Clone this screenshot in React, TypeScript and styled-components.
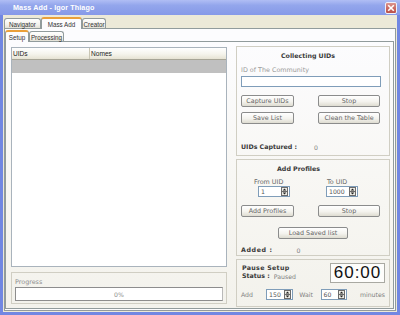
import React from 'react';
import styled, { createGlobalStyle } from 'styled-components';

const UI = `'DejaVu Sans', Verdana, sans-serif`;
const SANS = `'Liberation Sans', Arial, sans-serif`;

const GlobalStyle = createGlobalStyle`
  html, body { margin: 0; padding: 0; }
  body { width: 400px; height: 315px; overflow: hidden; background: #fff; }
  * { box-sizing: border-box; }
`;

const Window = styled.div`
  width: 400px;
  height: 315px;
  display: flex;
  flex-direction: column;
  background: #7187e2;
`;

const TitleBar = styled.div`
  height: 15px;
  flex: none;
  display: flex;
  align-items: center;
  justify-content: space-between;
  padding: 0 3px 0 13px;
  background: linear-gradient(180deg, #b0bef4 0%, #93a6ec 35%, #8699e8 100%);
`;

const Title = styled.span`
  font-family: ${SANS};
  font-weight: 700;
  font-size: 7.2px;
  color: #fff;
  letter-spacing: 0.1px;
`;

const CloseButton = styled.div`
  width: 12px;
  height: 12px;
  border: 1px solid #eef0fa;
  border-radius: 2px;
  background: linear-gradient(180deg, #dc958f 0%, #c8645d 60%, #b9524c 100%);
  display: flex;
  align-items: center;
  justify-content: center;
`;

const Client = styled.div`
  flex: 1;
  margin: 0 3px 3px;
  background: #ece9d8;
  display: flex;
  flex-direction: column;
  padding: 0 1px 1px;
  min-height: 0;
`;

const TabStrip = styled.div<{ $h: number; $pad?: number }>`
  height: ${(p) => p.$h}px;
  flex: none;
  display: flex;
  align-items: flex-end;
  padding-left: ${(p) => p.$pad ?? 0}px;
  position: relative;
  z-index: 1;
`;

const Tab = styled.div<{ $w: number; $active?: boolean }>`
  width: ${(p) => p.$w}px;
  height: ${(p) => (p.$active ? 12 : 10)}px;
  margin-bottom: ${(p) => (p.$active ? -1 : 0)}px;
  border: 1px solid #919b9c;
  border-bottom: none;
  border-top: ${(p) => (p.$active ? '2px solid #eaa03a' : '1px solid #919b9c')};
  border-radius: 3px 3px 0 0;
  background: ${(p) =>
    p.$active ? '#fcfcfe' : 'linear-gradient(180deg, #ffffff 0%, #f3f2ed 60%, #e3e1d6 100%)'};
  font-family: ${SANS};
  font-size: 6.3px;
  color: #333;
  display: flex;
  align-items: center;
  justify-content: center;
  padding-top: ${(p) => (p.$active ? 0 : 1)}px;
`;

const OuterPage = styled.div`
  flex: 1;
  min-height: 0;
  border: 1px solid #919b9c;
  background: #fcfcfe;
  display: flex;
  flex-direction: column;
  padding: 0 1px 1px 0;
`;

const InnerPage = styled.div`
  flex: 1;
  min-height: 0;
  border: 1px solid #919b9c;
  background: linear-gradient(180deg, #fcfcfe 0%, #f7f6f2 60%, #f3f2ec 100%);
  padding: 4px 2px 1px 5px;
`;

const Columns = styled.div`
  display: grid;
  grid-template-columns: 216px 154px;
  column-gap: 9px;
  height: 100%;
`;

const LeftCol = styled.div`
  display: flex;
  flex-direction: column;
  gap: 5px;
  padding-top: 1px;
`;

const RightCol = styled.div`
  display: flex;
  flex-direction: column;
  gap: 3px;
`;

const ListView = styled.div`
  height: 220px;
  border: 1px solid #a9b3bc;
  background: #fff;
  display: flex;
  flex-direction: column;
`;

const ListHeader = styled.div`
  height: 12px;
  display: grid;
  grid-template-columns: 78px 1fr;
  background: linear-gradient(180deg, #ffffff 0%, #f5f4ec 55%, #e6e3d3 100%);
  border-bottom: 1px solid #a7a596;
`;

const HeaderCell = styled.div<{ $divider?: boolean }>`
  font-family: ${SANS};
  font-size: 6.6px;
  color: #222;
  padding-left: 1px;
  display: flex;
  align-items: center;
  border-right: ${(p) => (p.$divider ? '1px solid #c9c6b4' : 'none')};
`;

const SelectedRow = styled.div`
  height: 13px;
  background: #c0c0c0;
`;

const Group = styled.div<{ $h: number }>`
  height: ${(p) => p.$h}px;
  border: 1px solid #d0cec3;
  display: flex;
  flex-direction: column;
`;

const ProgressGroup = styled(Group)`
  padding: 5px 3px 0 3px;
`;

const Label = styled.div<{ $tone?: string; $mt?: number; $ml?: number }>`
  font-family: ${UI};
  font-size: 6.4px;
  line-height: 8px;
  color: ${(p) => p.$tone ?? '#777'};
  margin-top: ${(p) => p.$mt ?? 0}px;
  margin-left: ${(p) => p.$ml ?? 0}px;
  white-space: nowrap;
`;

const Strong = styled.span<{ $mt?: number; $ml?: number; $ls?: number }>`
  display: block;
  font-family: ${UI};
  font-weight: 700;
  font-size: 6.3px;
  line-height: 8px;
  letter-spacing: ${(p) => p.$ls ?? 0}px;
  color: #3a3a3a;
  margin-top: ${(p) => p.$mt ?? 0}px;
  margin-left: ${(p) => p.$ml ?? 0}px;
  white-space: nowrap;
`;

const ProgressBar = styled.div`
  height: 14px;
  margin-top: 1px;
  border: 1px solid #8d8d8d;
  border-right-color: #b9b9b9;
  background: #fff;
  font-family: ${UI};
  font-size: 6.2px;
  color: #8a8a8a;
  display: flex;
  align-items: center;
  justify-content: center;
`;

const Panel = styled(Group)<{ $pt?: number }>`
  padding: ${(p) => p.$pt ?? 5}px 4px 0 4px;
`;

const TextBox = styled.div`
  width: 140px;
  height: 11px;
  margin-top: 2px;
  border: 1px solid #7f9db9;
  background: #fff;
`;

const ButtonGrid = styled.div<{ $mt: number }>`
  display: grid;
  grid-template-columns: 53px 62px;
  column-gap: 24px;
  row-gap: 5px;
  margin-top: ${(p) => p.$mt}px;
`;

const Button = styled.div<{ $w?: number; $ml?: number; $mt?: number }>`
  height: 12px;
  width: ${(p) => (p.$w ? `${p.$w}px` : 'auto')};
  margin-left: ${(p) => p.$ml ?? 0}px;
  margin-top: ${(p) => p.$mt ?? 0}px;
  border: 1px solid #8b8c8c;
  border-radius: 2px;
  background: linear-gradient(180deg, #ffffff 0%, #f4f3ee 55%, #dedcd1 100%);
  font-family: ${UI};
  font-size: 6.4px;
  color: #666;
  display: flex;
  align-items: center;
  justify-content: center;
  white-space: nowrap;
`;

const ValueRow = styled.div<{ $mt: number; $gap: number }>`
  display: flex;
  align-items: center;
  gap: ${(p) => p.$gap}px;
  margin-top: ${(p) => p.$mt}px;
`;

const SpinRow = styled.div`
  display: flex;
  margin-top: 5px;
`;

const SpinField = styled.div<{ $w: number; $ml: number }>`
  width: ${(p) => p.$w}px;
  margin-left: ${(p) => p.$ml}px;
  display: flex;
  flex-direction: column;
`;

const SpinBox = styled.div<{ $w: number; $ml?: number }>`
  width: ${(p) => p.$w}px;
  height: 11px;
  margin-left: ${(p) => p.$ml ?? 0}px;
  border: 1px solid #7f9db9;
  background: #fff;
  display: flex;
  align-items: center;
  justify-content: space-between;
  padding: 0 1px 0 2px;
  font-family: ${UI};
  font-size: 6.2px;
  color: #555;
`;

const SpinArrows = styled.svg`
  width: 7px;
  height: 9px;
  display: block;
`;

const PauseTop = styled.div`
  display: flex;
  justify-content: space-between;
  align-items: flex-start;
  height: 20px;
`;

const Clock = styled.div`
  width: 55px;
  height: 20px;
  border: 1px solid #a9a9a2;
  background: #fdfdfb;
  font-family: ${SANS};
  font-size: 17px;
  letter-spacing: 1px;
  color: #111;
  display: flex;
  align-items: center;
  justify-content: center;
`;

const PauseBottom = styled.div`
  display: flex;
  align-items: center;
  margin-top: 6px;
`;

const Inline = styled.span<{ $w?: number; $ml?: number }>`
  display: inline-block;
  width: ${(p) => (p.$w ? `${p.$w}px` : 'auto')};
  margin-left: ${(p) => p.$ml ?? 0}px;
  font-family: ${UI};
  font-size: 6.2px;
  color: #808080;
  white-space: nowrap;
`;

function Spinner({ value, w, ml }: { value: string; w: number; ml?: number }) {
  return (
    <SpinBox $w={w} $ml={ml}>
      <span>{value}</span>
      <SpinArrows viewBox="0 0 7 9">
        <rect x="0.5" y="0.5" width="6" height="8" fill="#ecebe4" stroke="#6b6b6b" />
        <line x1="0.5" y1="4.5" x2="6.5" y2="4.5" stroke="#6b6b6b" />
        <path d="M3.5 1.6 L5.3 3.6 L1.7 3.6 Z" fill="#222" />
        <path d="M1.7 5.4 L5.3 5.4 L3.5 7.4 Z" fill="#222" />
      </SpinArrows>
    </SpinBox>
  );
}

export default function App() {
  return (
    <>
      <GlobalStyle />
      <Window>
        <TitleBar>
          <Title>Mass Add - Igor Thiago</Title>
          <CloseButton>
            <svg width="8" height="8" viewBox="0 0 8 8">
              <path d="M1.2 1.2 L6.8 6.8 M6.8 1.2 L1.2 6.8" stroke="#fff" strokeWidth="1.6" />
            </svg>
          </CloseButton>
        </TitleBar>

        <Client>
          <TabStrip $h={13}>
            <Tab $w={37}>Navigator</Tab>
            <Tab $w={41} $active>Mass Add</Tab>
            <Tab $w={24}>Creator</Tab>
          </TabStrip>

          <OuterPage>
            <TabStrip $h={12}>
              <Tab $w={24} $active>Setup</Tab>
              <Tab $w={35}>Processing</Tab>
            </TabStrip>

            <InnerPage>
              <Columns>
                <LeftCol>
                  <ListView>
                    <ListHeader>
                      <HeaderCell $divider>UIDs</HeaderCell>
                      <HeaderCell>Nomes</HeaderCell>
                    </ListHeader>
                    <SelectedRow />
                  </ListView>

                  <ProgressGroup $h={32}>
                    <Label $tone="#8e8e8e">Progress</Label>
                    <ProgressBar>0%</ProgressBar>
                  </ProgressGroup>
                </LeftCol>

                <RightCol>
                  <Panel $h={110}>
                    <Strong $ml={40}>Collecting UIDs</Strong>
                    <Label $tone="#999" $mt={6}>ID of The Community</Label>
                    <TextBox />
                    <ButtonGrid $mt={8}>
                      <Button>Capture UIDs</Button>
                      <Button>Stop</Button>
                      <Button>Save List</Button>
                      <Button>Clean the Table</Button>
                    </ButtonGrid>
                    <ValueRow $mt={19} $gap={0}>
                      <Strong>UIDs Captured :</Strong>
                      <Inline $ml={17}>0</Inline>
                    </ValueRow>
                  </Panel>

                  <Panel $h={97}>
                    <Strong $ml={36}>Add Profiles</Strong>
                    <SpinRow>
                      <SpinField $w={72} $ml={13}>
                        <Label $tone="#666">From UID</Label>
                        <Spinner value="1" w={32} ml={4} />
                      </SpinField>
                      <SpinField $w={40} $ml={0}>
                        <Label $tone="#666" $ml={1}>To UID</Label>
                        <Spinner value="1000" w={32} />
                      </SpinField>
                    </SpinRow>
                    <ButtonGrid $mt={8}>
                      <Button>Add Profiles</Button>
                      <Button>Stop</Button>
                    </ButtonGrid>
                    <Button $w={70} $ml={37} $mt={10}>Load Saved list</Button>
                    <ValueRow $mt={7} $gap={0}>
                      <Strong $ls={0.6}>Added :</Strong>
                      <Inline $ml={24}>0</Inline>
                    </ValueRow>
                  </Panel>

                  <Panel $h={48} $pt={3}>
                    <PauseTop>
                      <div>
                        <Strong $mt={1} $ml={1} $ls={0.3}>Pause Setup</Strong>
                        <ValueRow $mt={0} $gap={4}>
                          <Strong $ml={1}>Status :</Strong>
                          <Inline>Paused</Inline>
                        </ValueRow>
                      </div>
                      <Clock>60:00</Clock>
                    </PauseTop>
                    <PauseBottom>
                      <Inline $w={27}>Add</Inline>
                      <Spinner value="150" w={29} />
                      <Inline $w={23} $ml={6}>Wait</Inline>
                      <Spinner value="60" w={28} />
                      <Inline $ml={13}>minutes</Inline>
                    </PauseBottom>
                  </Panel>
                </RightCol>
              </Columns>
            </InnerPage>
          </OuterPage>
        </Client>
      </Window>
    </>
  );
}
